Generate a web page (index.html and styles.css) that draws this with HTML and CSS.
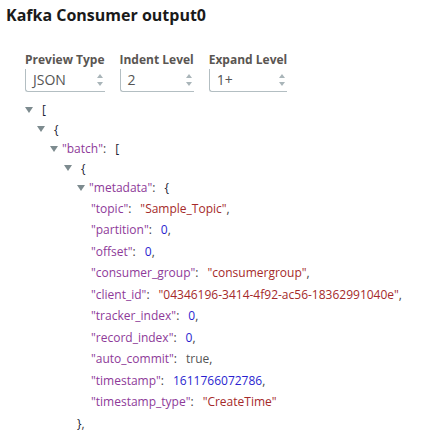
FILE: index.html
```html
<!DOCTYPE html>
<html>
<head>
<meta charset="utf-8">
<link rel="stylesheet" href="styles.css">
</head>
<body>
<div class="page">
  <h1 class="title">Kafka Consumer output0</h1>
  <div class="controls">
    <div class="field">
      <div class="label">Preview Type</div>
      <div class="select"><span class="val">JSON</span><span class="spin"><i class="up"></i><i class="down"></i></span></div>
    </div>
    <div class="field">
      <div class="label">Indent Level</div>
      <div class="select"><span class="val">2</span><span class="spin"><i class="up"></i><i class="down"></i></span></div>
    </div>
    <div class="field">
      <div class="label">Expand Level</div>
      <div class="select"><span class="val">1+</span><span class="spin"><i class="up"></i><i class="down"></i></span></div>
    </div>
  </div>
  <div class="tree">
    <div class="row parent l0"><span class="tog"></span><span class="br gap">[</span></div>
    <div class="row parent l1"><span class="tog"></span><span class="br gap">{</span></div>
    <div class="row parent l2"><span class="tog"></span><span class="key kgap">"batch"</span><span class="p colon">:</span><span class="br">[</span></div>
    <div class="row parent l3"><span class="tog"></span><span class="br gap">{</span></div>
    <div class="row parent l4"><span class="tog"></span><span class="key kgap">"metadata"</span><span class="p colon">:</span><span class="br">{</span></div>
    <div class="row leaf l5"><span class="key">"topic"</span><span class="p colon">:</span><span class="str">"Sample_Topic"</span><span class="p">,</span></div>
    <div class="row leaf l5"><span class="key">"partition"</span><span class="p colon">:</span><span class="num">0</span><span class="p">,</span></div>
    <div class="row leaf l5"><span class="key">"offset"</span><span class="p colon">:</span><span class="num">0</span><span class="p">,</span></div>
    <div class="row leaf l5"><span class="key">"consumer_group"</span><span class="p colon">:</span><span class="str">"consumergroup"</span><span class="p">,</span></div>
    <div class="row leaf l5"><span class="key">"client_id"</span><span class="p colon">:</span><span class="str">"04346196-3414-4f92-ac56-18362991040e"</span><span class="p">,</span></div>
    <div class="row leaf l5"><span class="key">"tracker_index"</span><span class="p colon">:</span><span class="num">0</span><span class="p">,</span></div>
    <div class="row leaf l5"><span class="key">"record_index"</span><span class="p colon">:</span><span class="num">0</span><span class="p">,</span></div>
    <div class="row leaf l5"><span class="key">"auto_commit"</span><span class="p colon">:</span><span class="bool">true</span><span class="p">,</span></div>
    <div class="row leaf l5"><span class="key">"timestamp"</span><span class="p colon">:</span><span class="num">1611766072786</span><span class="p">,</span></div>
    <div class="row leaf l5"><span class="key">"timestamp_type"</span><span class="p colon">:</span><span class="str">"CreateTime"</span></div>
    <div class="row leaf l4c"><span class="br">}</span><span class="p">,</span></div>
  </div>
</div>
</body>
</html>
```

FILE: styles.css
```css
html, body {
  margin: 0;
  padding: 0;
  background: #ffffff;
}

.page {
  font-family: "Open Sans", "Noto Sans", sans-serif;
  padding-top: 4px;
}

.title {
  margin: 0 0 0 6px;
  font-size: 16px;
  line-height: 22px;
  font-weight: 700;
  color: #1a1a1a;
}

.controls {
  display: flex;
  gap: 15px;
  margin-top: 26px;
  padding-left: 25px;
}

.field {
  display: flex;
  flex-direction: column;
}

.label {
  font-size: 12px;
  line-height: 16px;
  font-weight: 700;
  color: #5a5652;
  white-space: nowrap;
  margin-bottom: 1px;
}

.select {
  height: 22px;
  display: flex;
  align-items: center;
  justify-content: space-between;
  border-left: 1px solid #b3bec2;
  border-bottom: 1px solid #b3bec2;
  border-bottom-left-radius: 3px;
  padding-left: 7px;
  padding-right: 2px;
}

.val {
  font-size: 14px;
  line-height: 22px;
  color: #555555;
}

.spin {
  display: flex;
  flex-direction: column;
  gap: 4px;
}

.spin i {
  display: block;
  width: 0;
  height: 0;
  border-left: 3.5px solid transparent;
  border-right: 3.5px solid transparent;
}

.spin .up {
  border-bottom: 4px solid #a9b5b9;
}

.spin .down {
  border-top: 4px solid #a9b5b9;
}

.tree {
  margin-top: 8px;
  font-size: 12px;
  color: #444444;
}

.row {
  display: flex;
  align-items: center;
  white-space: nowrap;
}

.row.parent {
  height: 19.5px;
  line-height: 19.5px;
}

.row.leaf {
  height: 21.5px;
  line-height: 21.5px;
}

.l0 { padding-left: 25px; }
.l1 { padding-left: 37px; }
.l2 { padding-left: 50px; }
.l3 { padding-left: 64px; }
.l4 { padding-left: 77px; }
.l4c { padding-left: 77px; }
.l5 { padding-left: 91px; }

.tog {
  width: 0;
  height: 0;
  border-left: 4.5px solid transparent;
  border-right: 4.5px solid transparent;
  border-top: 6px solid #7d8b8f;
}

.gap { margin-left: 9px; }
.kgap { margin-left: 4px; }

.br { color: #1d1d35; }
.key { color: #8e3a99; }
.str { color: #a52a2a; }
.num { color: #2a1fd0; }
.bool { color: #555555; }
.p { color: #444444; }
.colon { margin-right: 9px; }
```
